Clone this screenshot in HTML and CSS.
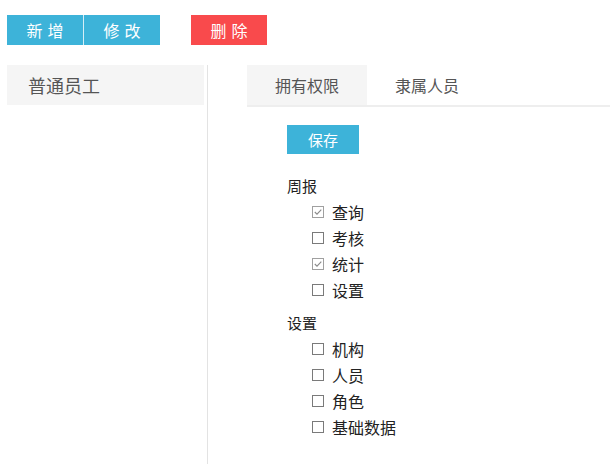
FILE: index.html
```html
<!DOCTYPE html>
<html lang="zh">
<head>
<meta charset="utf-8">
<link rel="stylesheet" href="styles.css">
</head>
<body>
<div class="toolbar">
  <div class="btn-group">
    <button class="btn btn-blue">新增</button>
    <button class="btn btn-blue">修改</button>
  </div>
  <button class="btn btn-red">删除</button>
</div>
<div class="main">
  <div class="side">
    <div class="side-item">普通员工</div>
  </div>
  <div class="content">
    <div class="tabs">
      <div class="tab active">拥有权限</div>
      <div class="tab">隶属人员</div>
    </div>
    <div class="pane">
      <button class="save">保存</button>
      <div class="group">
        <div class="group-title">周报</div>
        <label class="item"><span class="cb checked"><svg viewBox="0 0 12 12" width="12" height="12"><path d="M2.8 6 L5 8.2 L9.3 3.6" fill="none" stroke="#8a8a8a" stroke-width="1.1"/></svg></span>查询</label>
        <label class="item"><span class="cb"></span>考核</label>
        <label class="item"><span class="cb checked"><svg viewBox="0 0 12 12" width="12" height="12"><path d="M2.8 6 L5 8.2 L9.3 3.6" fill="none" stroke="#8a8a8a" stroke-width="1.1"/></svg></span>统计</label>
        <label class="item"><span class="cb"></span>设置</label>
      </div>
      <div class="group">
        <div class="group-title">设置</div>
        <label class="item"><span class="cb"></span>机构</label>
        <label class="item"><span class="cb"></span>人员</label>
        <label class="item"><span class="cb"></span>角色</label>
        <label class="item"><span class="cb"></span>基础数据</label>
      </div>
    </div>
  </div>
</div>
</body>
</html>
```
FILE: styles.css
```css
* { box-sizing: border-box; }
html, body { margin: 0; padding: 0; background: #fff; }
body {
  font-family: "Noto Sans CJK SC", "Noto Sans", sans-serif;
  color: #333;
  width: 610px;
  height: 464px;
  overflow: hidden;
}
.toolbar {
  display: flex;
  padding: 15px 0 0 7px;
  height: 45px;
}
.btn-group { display: flex; }
.btn {
  width: 76px;
  height: 30px;
  border: none;
  margin: 0;
  padding: 0 0 0 5px;
  font-family: inherit;
  font-size: 16px;
  letter-spacing: 5px;
  color: #fff;
  line-height: 30px;
}
.btn-blue { background: #3db3d9; }
.btn-blue + .btn-blue { border-left: 1px solid #d7eef6; width: 77px; }
.btn-red { background: #f94a4c; margin-left: 31px; }
.main {
  display: flex;
  margin-top: 20px;
  height: 399px;
}
.side {
  width: 201px;
  margin-left: 7px;
  border-right: 1px solid #e3e3e3;
}
.side-item {
  width: 197px;
  height: 40px;
  line-height: 40px;
  background: #f5f5f5;
  padding-left: 21px;
  font-size: 18px;
  color: #555;
}
.content {
  flex: 1;
  margin-left: 39px;
}
.tabs {
  display: flex;
  border-bottom: 2px solid #eeeeee;
}
.tab {
  height: 40px;
  line-height: 40px;
  padding: 0 28px;
  font-size: 16px;
  color: #555;
}
.tab.active { background: #f5f5f5; }
.pane { padding-left: 40px; }
.save {
  margin-top: 18px;
  width: 72px;
  height: 29px;
  border: none;
  padding: 0;
  background: #3db3d9;
  color: #fff;
  font-family: inherit;
  font-size: 15px;
  line-height: 29px;
}
.group { margin-top: 19px; }
.group + .group { margin-top: 7px; }
.group-title {
  font-size: 15px;
  line-height: 26px;
  height: 26px;
  color: #222;
}
.item {
  display: flex;
  align-items: center;
  height: 26px;
  padding-left: 25px;
  font-size: 16px;
  color: #222;
}
.cb {
  width: 12px;
  height: 12px;
  border: 1px solid #7a7a7a;
  margin-right: 8px;
  position: relative;
  flex: none;
}
.cb.checked { border-color: #a0a0a0; }
.cb svg { position: absolute; left: -1px; top: -1px; }
```
